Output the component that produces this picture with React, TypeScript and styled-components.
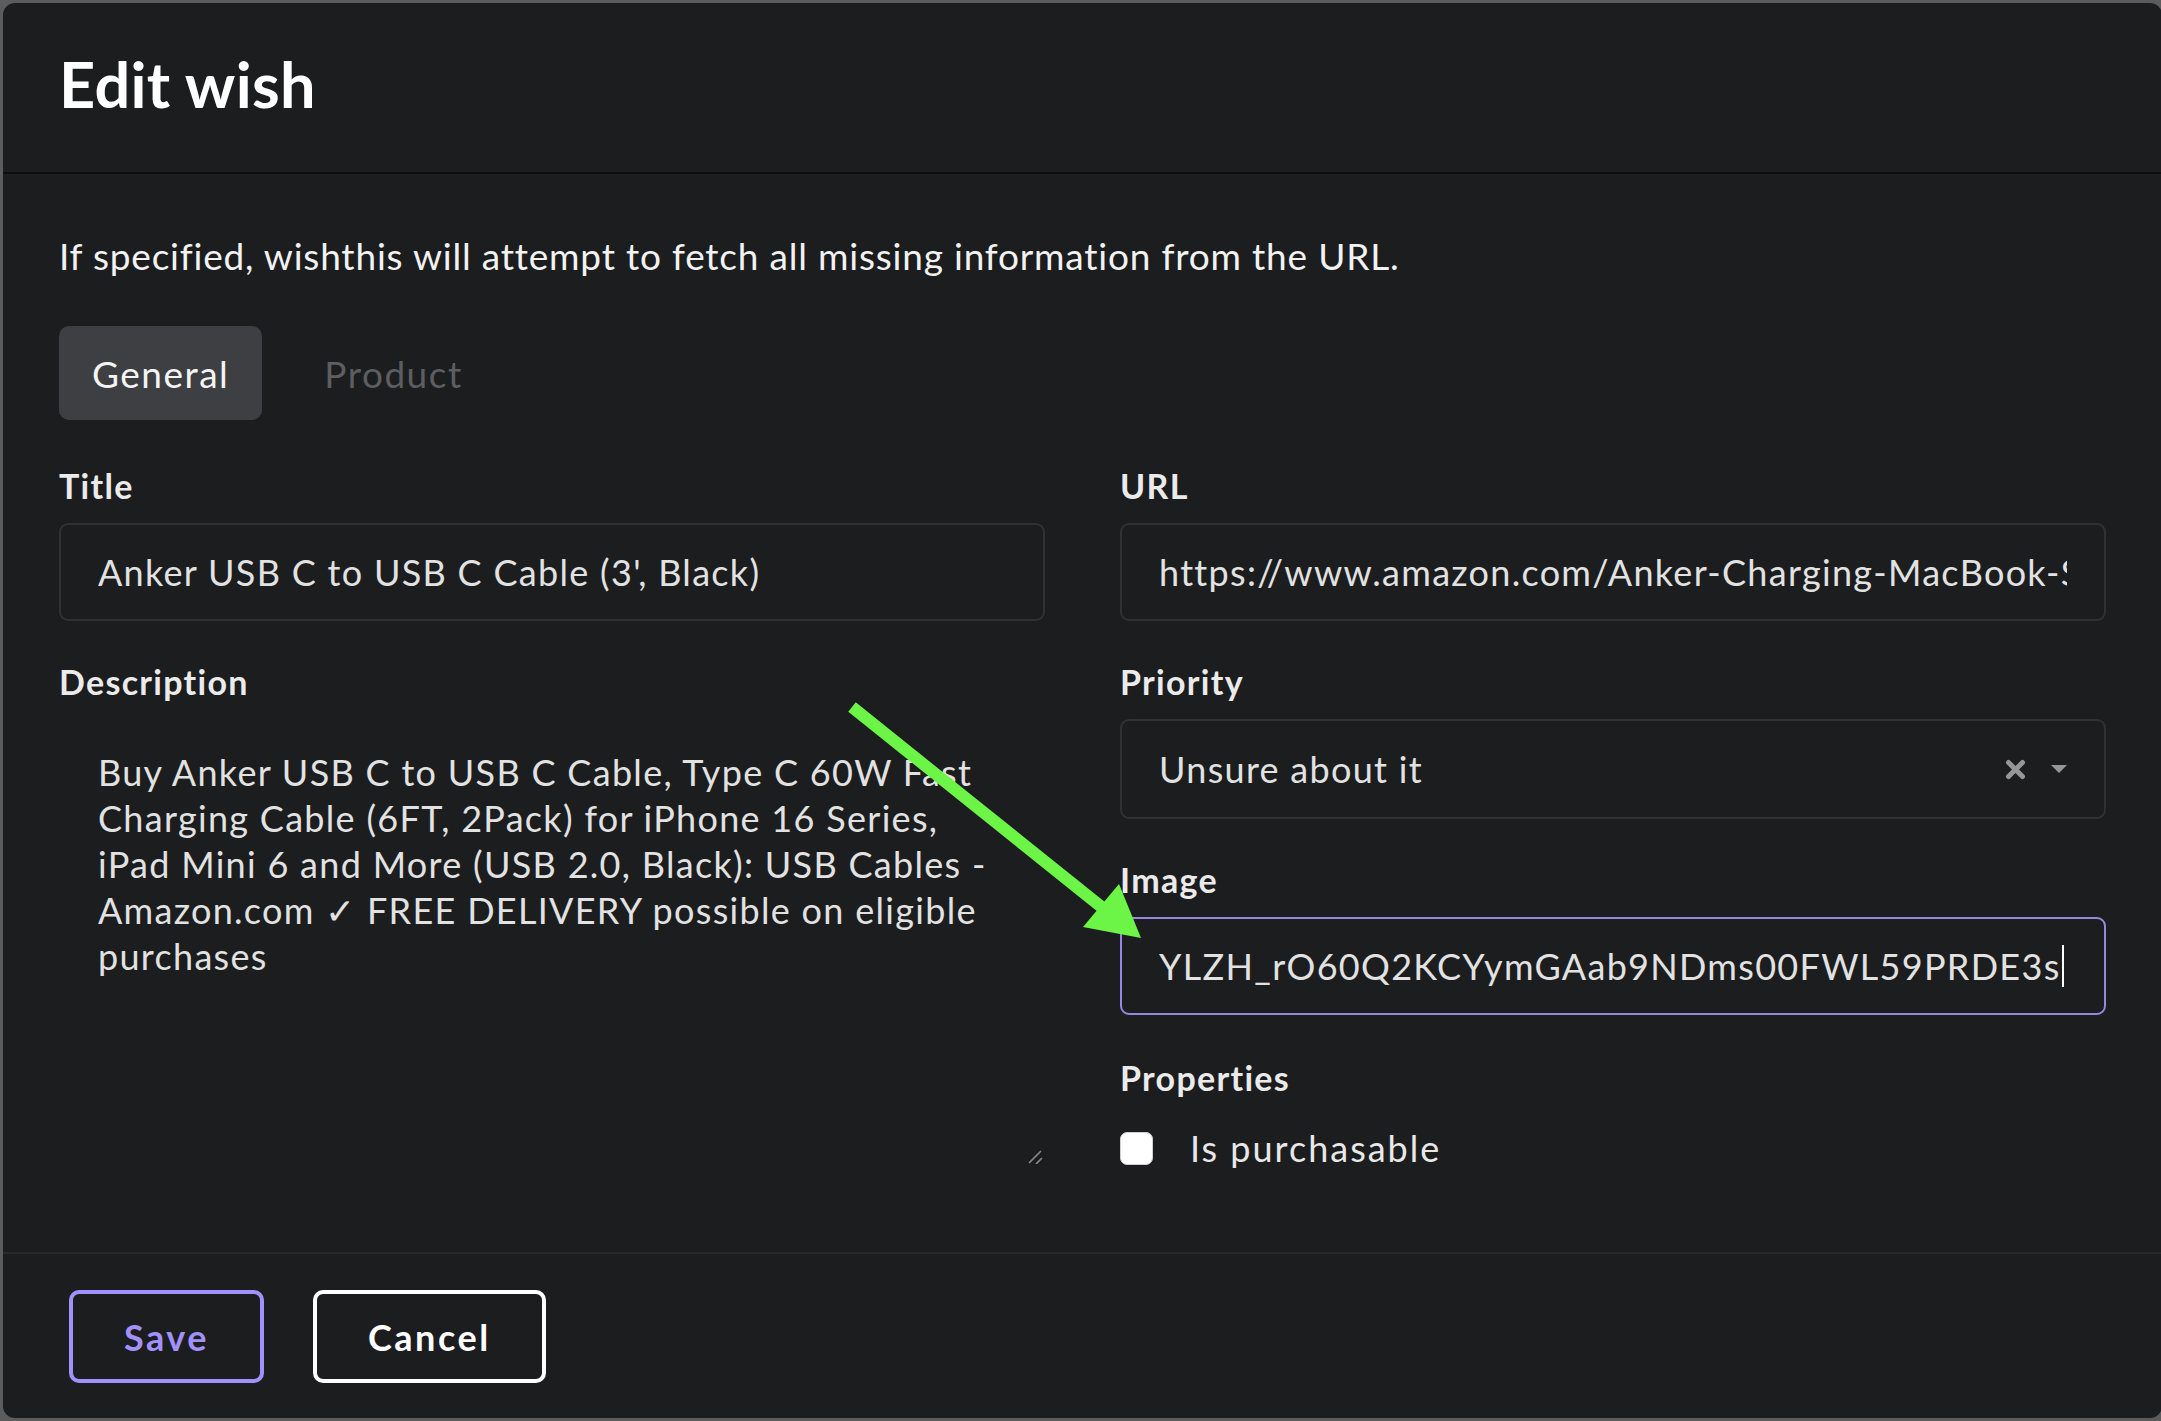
import React from 'react';
import styled, { createGlobalStyle } from 'styled-components';

const GlobalStyle = createGlobalStyle`
  html, body { margin: 0; padding: 0; background: #5c5c5c; overflow: hidden; }
  body { font-family: Lato, "Noto Sans", sans-serif; -webkit-font-smoothing: antialiased; }
  * { box-sizing: border-box; }
`;

const Page = styled.div`
  position: relative;
  width: 2161px;
  height: 1421px;
  padding: 3px 0 3px 3px;
  background: #5c5c5c;
  overflow: hidden;
`;

const Modal = styled.div`
  width: 2159px;
  height: 1415px;
  background: #1c1d1f;
  border-radius: 12px;
  display: flex;
  flex-direction: column;
  overflow: hidden;
`;

const Header = styled.h1`
  margin: 0;
  padding: 41px 56px 48px;
  font-size: 63px;
  line-height: 80px;
  font-weight: 700;
  letter-spacing: 0.3px;
  color: #ffffff;
  border-bottom: 2px solid #0d0e0f;
`;

const Content = styled.div`
  flex: 1;
  padding: 56px 56px 0;
`;

const Intro = styled.p`
  margin: 0 0 44px;
  font-size: 37px;
  line-height: 52px;
  letter-spacing: 0.8px;
  color: #f2f2f2;
`;

const Tabs = styled.div`
  display: flex;
  gap: 29px;
  margin-bottom: 46px;
`;

const Tab = styled.div<{ $active?: boolean }>`
  height: 94px;
  padding: 0 33px;
  border-radius: 10px;
  display: flex;
  align-items: center;
  font-size: 37px;
  letter-spacing: 1.5px;
  background: ${(p) => (p.$active ? '#3e3f42' : 'transparent')};
  color: ${(p) => (p.$active ? '#f4f4f4' : '#5d5e61')};
`;

const Columns = styled.div`
  display: grid;
  grid-template-columns: 986px 986px;
  column-gap: 75px;
`;

const Column = styled.div`
  display: flex;
  flex-direction: column;
  gap: 41px;
`;

const Field = styled.div<{ $extraTop?: number }>`
  display: flex;
  flex-direction: column;
  margin-top: ${(p) => p.$extraTop ?? 0}px;
`;

const Label = styled.label`
  font-size: 34px;
  line-height: 40px;
  font-weight: 700;
  letter-spacing: 1.3px;
  color: #ebebeb;
  margin-bottom: 17px;
`;

const TextInput = styled.input`
  width: 100%;
  height: 98px;
  border: 2px solid #303134;
  border-radius: 9px;
  background: transparent;
  color: #e2e2e2;
  font-family: inherit;
  font-size: 36px;
  letter-spacing: 1.3px;
  padding: 0 37px;
  outline: none;
`;

const AreaWrap = styled.div`
  position: relative;
`;

const TextArea = styled.textarea`
  display: block;
  width: 100%;
  height: 447px;
  border: 2px solid transparent;
  border-radius: 9px;
  background: transparent;
  color: #e2e2e2;
  font-family: inherit;
  font-size: 36px;
  line-height: 46px;
  letter-spacing: 1.3px;
  padding: 28px 10px 28px 37px;
  outline: none;
  resize: none;
  overflow: hidden;
  white-space: pre;
`;

const Grip = styled.svg`
  position: absolute;
  right: 2px;
  bottom: 2px;
`;

const Dropdown = styled.div`
  height: 100px;
  border: 2px solid #303134;
  border-radius: 9px;
  display: flex;
  align-items: center;
  padding: 0 36px 0 37px;
  font-size: 36px;
  letter-spacing: 1.3px;
  color: #e2e2e2;
`;

const DropdownText = styled.span`
  flex: 1;
`;

const DropdownIcons = styled.span`
  display: flex;
  align-items: center;
  gap: 24px;
`;

const FocusedBox = styled.div`
  height: 98px;
  border: 2px solid #9787de;
  border-radius: 9px;
  display: flex;
  align-items: center;
  padding: 0 37px;
  font-size: 36px;
  letter-spacing: 1.3px;
  color: #e2e2e2;
  white-space: nowrap;
  overflow: hidden;
`;

const Caret = styled.span`
  display: inline-block;
  width: 2px;
  height: 42px;
  background: #ffffff;
  margin-left: 1px;
`;

const CheckRow = styled.label`
  display: flex;
  align-items: center;
  gap: 37px;
  margin-top: 11px;
  font-size: 36px;
  letter-spacing: 2px;
  color: #e8e8e8;
`;

const CheckBox = styled.span`
  width: 33px;
  height: 33px;
  border-radius: 7px;
  background: #ffffff;
  border: 1px solid #cfcfd1;
`;

const Footer = styled.div`
  height: 166px;
  border-top: 2px solid #27282b;
  padding: 36px 66px 0;
  display: flex;
  align-items: flex-start;
  gap: 49px;
`;

const Button = styled.button<{ $color: string }>`
  height: 93px;
  padding: 0 51px;
  border: 4px solid ${(p) => p.$color};
  border-radius: 10px;
  background: transparent;
  color: ${(p) => p.$color};
  font-family: inherit;
  font-size: 36px;
  font-weight: 700;
  letter-spacing: 2.5px;
`;

const ArrowOverlay = styled.svg`
  position: absolute;
  left: 0;
  top: 0;
  pointer-events: none;
`;

const description = [
  'Buy Anker USB C to USB C Cable, Type C 60W Fast',
  'Charging Cable (6FT, 2Pack) for iPhone 16 Series,',
  'iPad Mini 6 and More (USB 2.0, Black): USB Cables -',
  'Amazon.com ✓ FREE DELIVERY possible on eligible',
  'purchases',
].join('\n');

export default function App() {
  return (
    <Page>
      <GlobalStyle />
      <Modal>
        <Header>Edit wish</Header>
        <Content>
          <Intro>If specified, wishthis will attempt to fetch all missing information from the URL.</Intro>
          <Tabs>
            <Tab $active>General</Tab>
            <Tab>Product</Tab>
          </Tabs>
          <Columns>
            <Column>
              <Field>
                <Label>Title</Label>
                <TextInput readOnly value="Anker USB C to USB C Cable (3', Black)" />
              </Field>
              <Field>
                <Label>Description</Label>
                <AreaWrap>
                  <TextArea readOnly value={description} />
                  <Grip width="16" height="16" viewBox="0 0 16 16">
                    <path d="M2 15 L14 3 M9 16 L15 10" stroke="#8a8a8a" strokeWidth="1.6" />
                  </Grip>
                </AreaWrap>
              </Field>
            </Column>
            <Column>
              <Field>
                <Label>URL</Label>
                <TextInput readOnly value="https://www.amazon.com/Anker-Charging-MacBook-Samsung-Galaxy/dp/B088NRLMPV" />
              </Field>
              <Field>
                <Label>Priority</Label>
                <Dropdown>
                  <DropdownText>Unsure about it</DropdownText>
                  <DropdownIcons>
                    <svg width="21" height="21" viewBox="0 0 21 21">
                      <path d="M3.5 3.5 L17.5 17.5 M17.5 3.5 L3.5 17.5" stroke="#969696" strokeWidth="5" strokeLinecap="round" />
                    </svg>
                    <svg width="18" height="10" viewBox="0 0 18 10">
                      <path d="M1 1 L17 1 L9 9 Z" fill="#969696" />
                    </svg>
                  </DropdownIcons>
                </Dropdown>
              </Field>
              <Field>
                <Label>Image</Label>
                <FocusedBox>
                  YLZH_rO60Q2KCYymGAab9NDms00FWL59PRDE3s
                  <Caret />
                </FocusedBox>
              </Field>
              <Field $extraTop={2}>
                <Label>Properties</Label>
                <CheckRow>
                  <CheckBox />
                  Is purchasable
                </CheckRow>
              </Field>
            </Column>
          </Columns>
        </Content>
        <Footer>
          <Button $color="#a291fb">Save</Button>
          <Button $color="#ffffff">Cancel</Button>
        </Footer>
      </Modal>
      <ArrowOverlay width="2161" height="1421" viewBox="0 0 2161 1421">
        <line x1="852" y1="707" x2="1104" y2="909" stroke="#6cf547" strokeWidth="12" />
        <polygon points="1083,927 1119,884 1141,938" fill="#6cf547" />
      </ArrowOverlay>
    </Page>
  );
}
